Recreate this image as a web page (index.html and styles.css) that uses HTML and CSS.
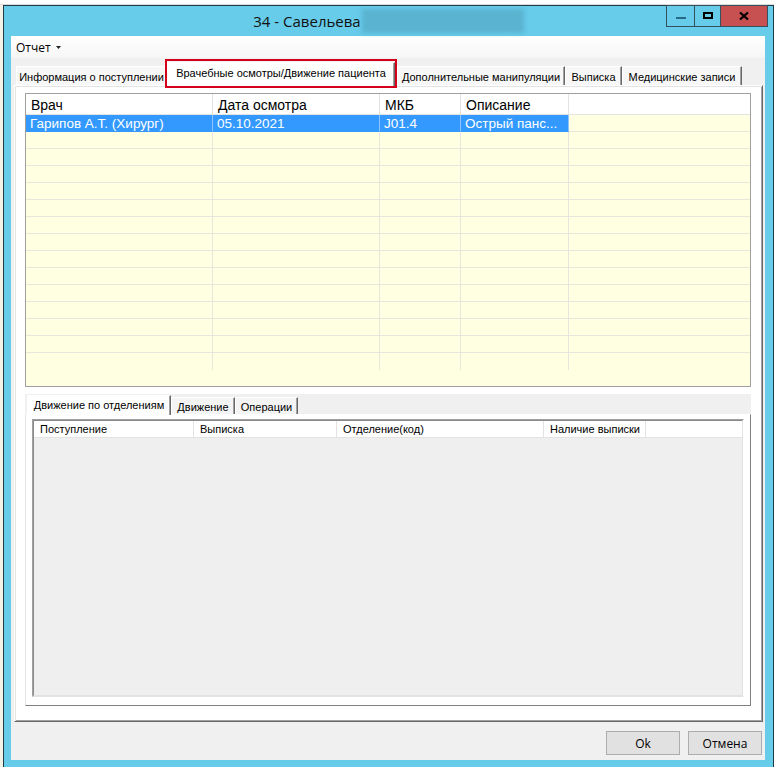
FILE: index.html
```html
<!DOCTYPE html>
<html lang="ru">
<head>
<meta charset="utf-8">
<title>34 - Савельева</title>
<link rel="stylesheet" href="styles.css">
</head>
<body>
<div class="desk">
  <div class="window">
    <div class="titlebar">
      <div class="title"><span class="title-text">34 - Савельева</span><span class="redact"></span></div>
      <div class="caption">
        <div class="cbtn cmin"><span class="g-min"></span></div>
        <div class="cbtn cmax"><span class="g-max"></span></div>
        <div class="cbtn cclose"><svg width="10" height="8" viewBox="0 0 10 8"><path d="M1 0.5 L9 7.5 M9 0.5 L1 7.5" stroke="#000" stroke-width="2.2" fill="none"/></svg></div>
      </div>
    </div>
    <div class="frame">
      <div class="client">
        <div class="menubar">
          <span class="menu">Отчет</span>
          <svg class="caret" width="5" height="3" viewBox="0 0 5 3"><path d="M0 0 H5 L2.5 3 Z" fill="#222"/></svg>
        </div>
        <div class="tabs">
          <div class="strip">
            <div class="tab t1">Информация о поступлении</div>
            <div class="tab sel t2">Врачебные осмотры/Движение пациента</div>
            <div class="tab t3">Дополнительные манипуляции</div>
            <div class="tab t4">Выписка</div>
            <div class="tab t5">Медицинские записи</div>
          </div>
          <div class="panel">
            <div class="grid">
              <div class="row head">
                <div class="cell">Врач</div>
                <div class="cell">Дата осмотра</div>
                <div class="cell">МКБ</div>
                <div class="cell">Описание</div>
                <div class="cell fill"></div>
              </div>
              <div class="row selrow">
                <div class="cell hl">Гарипов А.Т. (Хирург)</div>
                <div class="cell hl">05.10.2021</div>
                <div class="cell hl">J01.4</div>
                <div class="cell hl">Острый панс...</div>
                <div class="cell fill"></div>
              </div>
              <div class="row"><div class="cell"></div><div class="cell"></div><div class="cell"></div><div class="cell"></div><div class="cell fill"></div></div>
              <div class="row"><div class="cell"></div><div class="cell"></div><div class="cell"></div><div class="cell"></div><div class="cell fill"></div></div>
              <div class="row"><div class="cell"></div><div class="cell"></div><div class="cell"></div><div class="cell"></div><div class="cell fill"></div></div>
              <div class="row"><div class="cell"></div><div class="cell"></div><div class="cell"></div><div class="cell"></div><div class="cell fill"></div></div>
              <div class="row"><div class="cell"></div><div class="cell"></div><div class="cell"></div><div class="cell"></div><div class="cell fill"></div></div>
              <div class="row"><div class="cell"></div><div class="cell"></div><div class="cell"></div><div class="cell"></div><div class="cell fill"></div></div>
              <div class="row"><div class="cell"></div><div class="cell"></div><div class="cell"></div><div class="cell"></div><div class="cell fill"></div></div>
              <div class="row"><div class="cell"></div><div class="cell"></div><div class="cell"></div><div class="cell"></div><div class="cell fill"></div></div>
              <div class="row"><div class="cell"></div><div class="cell"></div><div class="cell"></div><div class="cell"></div><div class="cell fill"></div></div>
              <div class="row"><div class="cell"></div><div class="cell"></div><div class="cell"></div><div class="cell"></div><div class="cell fill"></div></div>
              <div class="row"><div class="cell"></div><div class="cell"></div><div class="cell"></div><div class="cell"></div><div class="cell fill"></div></div>
              <div class="row"><div class="cell"></div><div class="cell"></div><div class="cell"></div><div class="cell"></div><div class="cell fill"></div></div>
              <div class="row"><div class="cell"></div><div class="cell"></div><div class="cell"></div><div class="cell"></div><div class="cell fill"></div></div>
              <div class="row last"><div class="cell"></div><div class="cell"></div><div class="cell"></div><div class="cell"></div><div class="cell fill"></div></div>
            </div>
            <div class="itabs">
              <div class="istrip">
                <div class="itab isel it1">Движение по отделениям</div>
                <div class="itab it2">Движение</div>
                <div class="itab it3">Операции</div>
              </div>
              <div class="ipanel">
                <div class="igrid-o">
                  <div class="igrid">
                    <div class="irow">
                      <div class="icell">Поступление</div>
                      <div class="icell">Выписка</div>
                      <div class="icell">Отделение(код)</div>
                      <div class="icell">Наличие выписки</div>
                      <div class="icell ifill"></div>
                    </div>
                  </div>
                </div>
              </div>
            </div>
          </div>
        </div>
        <div class="footer">
          <button class="btn">Ok</button>
          <button class="btn">Отмена</button>
        </div>
      </div>
    </div>
  </div>
</div>
</body>
</html>
```

FILE: styles.css
```css
* { box-sizing: border-box; }
html, body { margin: 0; padding: 0; }
body {
  width: 774px;
  height: 767px;
  overflow: hidden;
  background: #f4f2e6;
  font-family: "Liberation Sans", Arial, sans-serif;
  font-size: 11px;
  color: #000;
}
.desk {
  height: 767px;
  padding: 5px 0 0 3px;
  background: linear-gradient(#ffffff 0, #ffffff 4px, #dcdcdc 4px, #dcdcdc 5px, #f4f2e6 5px);
}
.window {
  width: 771px;
  height: 770px;
  border: 1px solid #1f3b47;
  background: #67cbea;
  display: flex;
  flex-direction: column;
}
/* title bar */
.titlebar {
  height: 30px;
  flex: none;
  display: grid;
  grid-template-columns: 1fr auto 1fr;
  align-items: start;
}
.title {
  grid-column: 2;
  height: 30px;
  display: flex;
  align-items: center;
  font-family: "Open Sans", "Noto Sans", sans-serif;
  font-size: 15px;
  color: #111;
  white-space: nowrap;
}
.redact {
  display: inline-block;
  width: 162px;
  height: 24px;
  margin-left: 1px;
  background: #5ab3d0;
  filter: blur(2px);
}
.caption {
  grid-column: 3;
  justify-self: end;
  margin: -1px 5px 0 0;
  height: 22px;
  display: flex;
  border: 1px solid #34505c;
  border-right: none;
}
.cbtn {
  height: 20px;
  border-right: 1px solid #34505c;
  display: flex;
  align-items: center;
  justify-content: center;
}
.cmin { width: 28px; align-items: flex-end; padding-bottom: 7px; }
.cmax { width: 26px; }
.cclose { width: 47px; background: #c75050; }
.g-min { display: block; width: 10px; height: 2px; background: #276a85; }
.g-max { display: block; width: 10px; height: 7px; border: 2px solid #000; margin-top: -1px; }
.cclose svg { display: block; margin-top: -1px; }

/* frame + client */
.frame {
  flex: 1;
  padding: 0 8px 0 7px;
}
.client {
  height: 724px;
  background: #f0f0f0;
  display: flex;
  flex-direction: column;
}
.menubar {
  height: 22px;
  flex: none;
  display: flex;
  align-items: center;
  padding-left: 5px;
  background: linear-gradient(#ffffff, #f6f6f6);
  font-family: "Open Sans", "Noto Sans", sans-serif;
  font-size: 12px;
}
.caret { margin-left: 5px; margin-top: 1px; }

/* main tabs */
.tabs {
  margin: 0 2px 0 3px;
  display: flex;
  flex-direction: column;
}
.strip {
  height: 27px;
  flex: none;
  display: flex;
  align-items: flex-end;
  padding-left: 2px;
  position: relative;
  z-index: 2;
}
.tab {
  height: 19px;
  display: flex;
  align-items: center;
  justify-content: center;
  white-space: nowrap;
  background: #f7f7f7;
  border-top: 1px solid #ffffff;
  border-left: 1px solid #ffffff;
  border-right: 1px solid #696969;
  box-shadow: inset -1px 0 0 #a0a0a0;
  padding-top: 1px;
}
.t1 { width: 151px; }
.t2 { width: 228px; }
.t3 { width: 168px; margin-left: 2px; }
.t4 { width: 57px; }
.t5 { width: 120px; }
.tab.sel {
  position: relative;
  height: 24px;
  margin-bottom: -1px;
  background: #ffffff;
  padding-bottom: 4px;
}
.tab.sel::after {
  content: "";
  position: absolute;
  left: -3px;
  right: -3px;
  top: -4px;
  bottom: -2px;
  border: 2px solid #d6001c;
}
.panel {
  height: 637px;
  flex: none;
  background: #ffffff;
  border-top: 1px solid #ffffff;
  border-left: 1px solid #ffffff;
  border-right: 1px solid #696969;
  border-bottom: 1px solid #696969;
  box-shadow: inset 1px 1px 0 #e3e3e3, inset -1px -1px 0 #a0a0a0;
  padding: 7px 11px 0 10px;
  display: flex;
  flex-direction: column;
  gap: 7px;
}

/* top data grid */
.grid {
  width: 726px;
  height: 294px;
  flex: none;
  border: 1px solid #a0a0a0;
  background: #ffffe2;
  overflow: hidden;
}
.row {
  display: grid;
  grid-template-columns: 187px 167px 81px 108px 1fr;
  height: 17px;
}
.row .cell {
  border-right: 1px solid #e6e6dc;
  border-bottom: 1px solid #e6e6dc;
  padding-left: 4px;
  display: flex;
  align-items: center;
  white-space: nowrap;
  overflow: hidden;
  font-size: 13.5px;
}
.row .cell.fill { border-right: none; }
.row.last .cell { border-bottom: none; }
.row.head { height: 21px; background: #ffffff; }
.row.head .cell {
  font-size: 14px;
  padding-left: 5px;
  border-right-color: #e3e3e3;
  border-bottom-color: #e3e3e3;
  padding-top: 1px;
}
.row.head .cell.fill { border-right: none; }
.cell.hl {
  background: #3399ff;
  color: #ffffff;
  border-right-color: #8fc3f5;
  border-bottom-color: #3399ff;
}

/* inner tabs */
.itabs {
  width: 726px;
  height: 312px;
  flex: none;
  display: flex;
  flex-direction: column;
  background: #f0f0f0;
}
.istrip {
  height: 20px;
  flex: none;
  display: flex;
  align-items: flex-end;
  padding-left: 2px;
  position: relative;
  z-index: 2;
}
.itab {
  height: 17px;
  display: flex;
  align-items: center;
  justify-content: center;
  white-space: nowrap;
  background: #f4f4f4;
  border-top: 1px solid #ffffff;
  border-left: 1px solid #ffffff;
  border-right: 1px solid #696969;
  box-shadow: inset -1px 0 0 #a0a0a0;
  padding-top: 1px;
}
.it1 { width: 144px; }
.it2 { width: 64px; }
.it3 { width: 63px; }
.itab.isel {
  height: 20px;
  margin-bottom: -1px;
  background: #ffffff;
  padding-bottom: 2px;
}
.ipanel {
  flex: 1;
  background: #ffffff;
  border-top: 1px solid #ffffff;
  border-left: 1px solid #e3e3e3;
  border-right: 1px solid #808080;
  border-bottom: 1px solid #808080;
  padding: 4px 6px 0 6px;
}
.igrid-o {
  width: 712px;
  height: 278px;
  border-top: 1px solid #a0a0a0;
  border-left: 1px solid #a0a0a0;
  border-right: 1px solid #ffffff;
  border-bottom: 1px solid #e3e3e3;
}
.igrid {
  height: 100%;
  background: #efefef;
  border-top: 1px solid #8a8a8a;
  border-left: 1px solid #8a8a8a;
  border-right: 1px solid #e3e3e3;
  border-bottom: 1px solid #e3e3e3;
}
.irow {
  display: grid;
  grid-template-columns: 160px 143px 207px 102px 1fr;
  height: 17px;
  background: #ffffff;
  border-bottom: 1px solid #e3e3e3;
}
.icell {
  border-right: 1px solid #e3e3e3;
  padding-left: 6px;
  display: flex;
  align-items: center;
  white-space: nowrap;
  font-size: 11px;
}
.icell.ifill { border-right: none; }

/* footer */
.footer {
  flex: 1;
  display: flex;
  justify-content: flex-end;
  align-items: flex-start;
  gap: 8px;
  padding: 9px 3px 0 0;
}
.btn {
  width: 74px;
  height: 24px;
  margin: 0;
  background: #e1e1e1;
  border: 1px solid #adadad;
  border-radius: 0;
  font-family: "Open Sans", "Noto Sans", sans-serif;
  font-size: 12px;
  color: #000;
  padding: 0;
}
```
